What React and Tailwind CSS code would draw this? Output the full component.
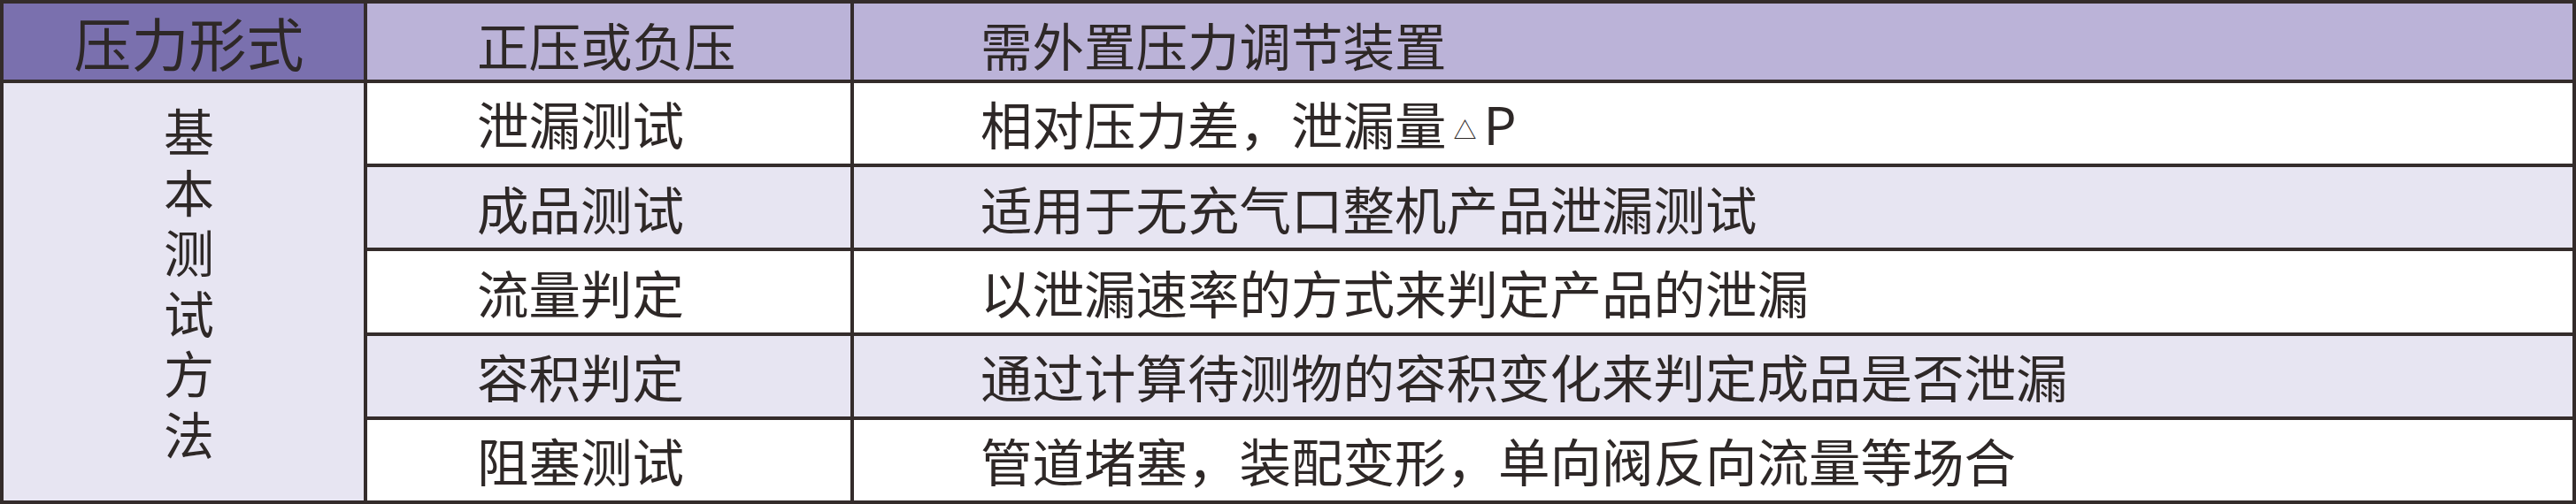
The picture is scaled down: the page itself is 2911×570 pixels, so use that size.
const rows = [
  { kind: "泄漏测试", note: "相对压力差，泄漏量", delta: true, shade: false },
  { kind: "成品测试", note: "适用于无充气口整机产品泄漏测试", shade: true },
  { kind: "流量判定", note: "以泄漏速率的方式来判定产品的泄漏", shade: false },
  { kind: "容积判定", note: "通过计算待测物的容积变化来判定成品是否泄漏", shade: true },
  { kind: "阻塞测试", note: "管道堵塞，装配变形，单向阀反向流量等场合", shade: false },
];

const side = ["基", "本", "测", "试", "方", "法"];

export default function App() {
  return (
    <div className="flex h-[570px] w-[2911px] flex-col border-4 border-[#342c2b] bg-white font-['Noto_Sans_CJK_SC','Noto_Sans',sans-serif] text-[#2e2827]">
      <div className="flex h-[90px] shrink-0 border-b-4 border-[#342c2b] bg-[#bbb3d8]">
        <div className="flex w-[411px] items-center justify-center border-r-4 border-[#342c2b] bg-[#7a70ae] pl-3 text-[65px] leading-none">
          压力形式
        </div>
        <div className="flex w-[550px] items-center border-r-4 border-[#342c2b] pt-[6px] pl-[124px] text-[58.5px] leading-none">
          正压或负压
        </div>
        <div className="flex flex-1 items-center pt-[6px] pl-[143px] text-[58.5px] leading-none">
          需外置压力调节装置
        </div>
      </div>

      <div className="flex flex-1">
        <div className="flex w-[411px] flex-col items-center justify-center gap-[11.5px] border-r-4 border-[#342c2b] bg-[#e7e5f2] pb-[24px] pl-3 text-[57px] leading-[57px]">
          {side.map((ch) => (
            <div key={ch} className="h-[57px]">
              {ch}
            </div>
          ))}
        </div>
        <div className="flex flex-1 flex-col">
          {rows.map((row, i) => (
            <div
              key={row.kind}
              className={[
                "flex flex-1",
                i > 0 ? "border-t-4 border-[#342c2b]" : "",
                row.shade ? "bg-[#e7e5f2]" : "bg-white",
              ].join(" ")}
            >
              <div className="flex w-[550px] items-center border-r-4 border-[#342c2b] pl-[124px] text-[58.5px] leading-none">
                {row.kind}
              </div>
              <div className="flex flex-1 items-center pl-[143px] text-[58.5px] leading-none">
                <span>
                  {row.note}
                  {row.delta ? (
                    <>
                      <span className="relative -top-[7px] ml-[8px] text-[26px]">△</span>
                      <span className="ml-[8px]">P</span>
                    </>
                  ) : null}
                </span>
              </div>
            </div>
          ))}
        </div>
      </div>
    </div>
  );
}
